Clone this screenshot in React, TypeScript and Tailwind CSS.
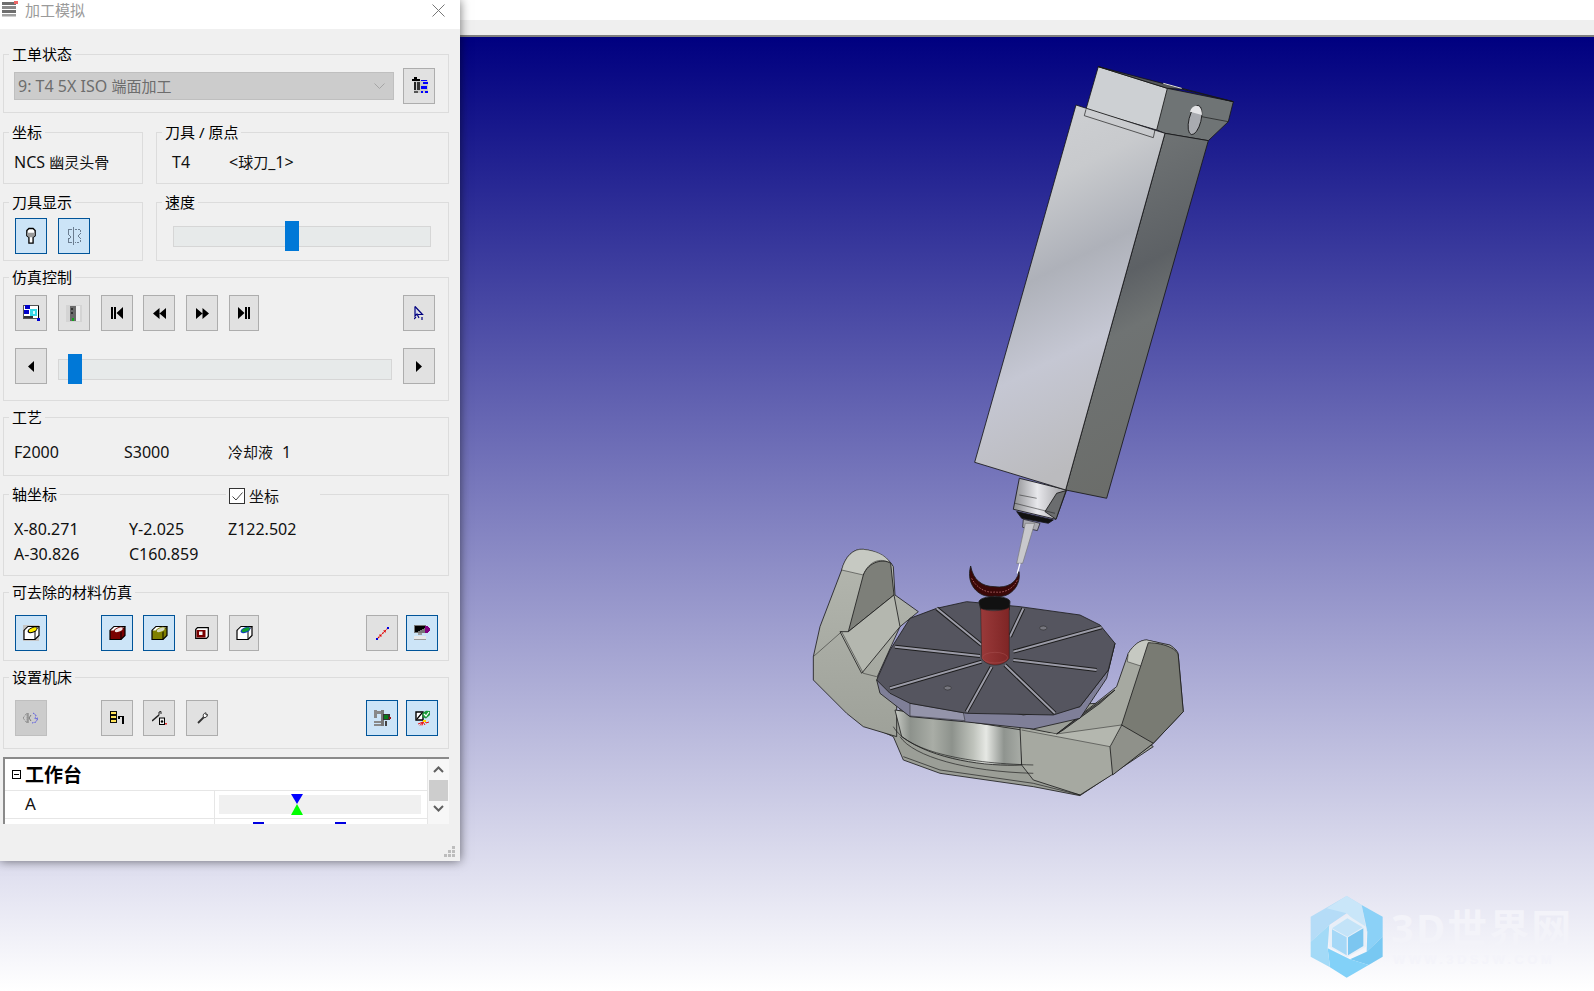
import React from "react";

const FONT = "font-['Noto_Sans','Noto_Sans_CJK_SC',sans-serif]";

type GroupProps = {
  title?: string;
  className?: string;
  children?: React.ReactNode;
  legend?: React.ReactNode;
};

// group box with the caption sitting on its top border
const Group = ({ title, className = "", children, legend }: GroupProps) => (
  <div className={`relative border border-[#dcdcdc] ${className}`}>
    {title && (
      <span className="absolute left-[5px] -top-[11px] bg-[#f0f0f0] px-[3px] text-[15px] leading-5 text-black whitespace-nowrap">
        {title}
      </span>
    )}
    {legend}
    {children}
  </div>
);

type BtnProps = {
  on?: boolean;
  disabled?: boolean;
  className?: string;
  children?: React.ReactNode;
};

const Btn = ({ on, disabled, className = "w-8", children }: BtnProps) => (
  <div
    className={`flex h-9 shrink-0 items-center justify-center border ${
      on
        ? "border-[#005499] bg-[#cce4f7]"
        : disabled
          ? "border-[#bfbfbf] bg-[#cccccc]"
          : "border-[#adadad] bg-[#e1e1e1]"
    } ${className}`}
  >
    {children}
  </div>
);

const Slider = ({ className, thumb }: { className: string; thumb: string }) => (
  <div className={`relative h-[21px] border border-[#d6d6d6] bg-[#e7eaea] ${className}`}>
    <div className={`absolute -top-[6px] h-[30px] w-[14px] bg-[#0078d7] ${thumb}`} />
  </div>
);

// latin runs read a little larger than the CJK ones in the original
const Num = ({ children, className = "" }: { children: React.ReactNode; className?: string }) => (
  <span className={`text-[16px] ${className}`}>{children}</span>
);

const Svg = ({ children, size = 16 }: { children: React.ReactNode; size?: number }) => (
  <svg width={size} height={size} viewBox="0 0 16 16" shapeRendering="crispEdges">
    {children}
  </svg>
);

const Cube = ({ fill, lens, rim, bg }: { fill: string; lens: string; rim?: string; bg?: string }) => (
  <svg width="17" height="16" viewBox="0 0 17 16">
    {bg && <rect x="0" y="0" width="16" height="16" fill={bg} />}
    <path d="M1 5.5 5 1.5H16V10.5L12 14.5H1Z" fill={fill} stroke="#000" strokeWidth="1.2" />
    <path d="M1.5 5.5 5.3 2H15.5L12 5.5Z" fill="#fff" />
    <path d="M12 14.5V5.5L16 1.5" fill="none" stroke="#000" strokeWidth="1" />
    <ellipse cx="9.5" cy="5" rx="5.2" ry="2.7" fill={rim ?? "#000"} transform="rotate(-22 9.5 5)" />
    <ellipse cx="9.7" cy="4.8" rx="4.2" ry="1.8" fill={lens} transform="rotate(-22 9.7 4.8)" />
  </svg>
);

const GridIcon = () => (
  <Svg size={17}>
    <rect x="3" y="3" width="13" height="12" fill="#c8c8c8" />
    <rect x="1" y="2" width="7" height="2" fill="#000" />
    <rect x="3" y="0" width="3" height="2" fill="#000" />
    <rect x="3" y="5" width="2" height="7" fill="#222" />
    <rect x="6" y="5" width="2" height="7" fill="#333" />
    <rect x="3" y="13" width="4" height="2" fill="#555" />
    <rect x="9" y="3" width="6" height="1" fill="#00f" />
    <rect x="11" y="5" width="5" height="2" fill="#00f" />
    <rect x="9" y="8" width="6" height="3" fill="#00f" />
    <rect x="9" y="13" width="2" height="2" fill="#00f" />
    <rect x="13" y="13" width="3" height="2" fill="#00f" />
  </Svg>
);

const ToolIcon = () => (
  <svg width="10" height="18" viewBox="0 0 12 20">
    <path d="M1 3.5 3.5 1H8.5L11 3.5V9.5L8.5 11.5V18.5H3.5V11.5L1 9.5Z" fill="#fff" stroke="#000" strokeWidth="1.6" />
    <path d="M1.5 6H10.5V9.5L8.5 11.5H3.5L1.5 9.5Z" fill="#9a9a9a" />
  </svg>
);

const ToolIconPale = () => (
  <svg width="14" height="18" viewBox="0 0 14 18" fill="none" stroke="#6b7d90" strokeWidth="1" shapeRendering="crispEdges">
    <path d="M6.5 0V18" />
    <path d="M5 2H1V7L3 9V11L1 12V15H5" />
    <path d="M8 2H13V7L11 8V10L13 11V15H8" strokeDasharray="2 1" />
  </svg>
);

const SimIcon = () => (
  <Svg size={17}>
    <rect x="0" y="0" width="15" height="13" fill="#555" />
    <rect x="1" y="1" width="13" height="11" fill="#fff" />
    <rect x="2" y="0" width="5" height="4" fill="#0000c8" />
    <rect x="1" y="5" width="5" height="3" fill="#0000c8" />
    <rect x="7" y="4" width="6" height="6" fill="#38d8e8" />
    <rect x="9" y="6" width="2" height="2" fill="#d8f8ff" />
    <rect x="1" y="10" width="8" height="2" fill="#333" />
    <rect x="14" y="1" width="1" height="11" fill="#000" />
    <rect x="13" y="12" width="3" height="3" fill="#0000d0" />
  </Svg>
);

const MachineIcon = () => (
  <svg width="16" height="17" viewBox="0 0 16 17" shapeRendering="crispEdges">
    <rect x="0" y="0" width="16" height="17" fill="#d4d4d4" />
    <rect x="4" y="1" width="6" height="15" fill="#6a6a6a" />
    <rect x="5" y="3" width="2" height="2" fill="#333" />
    <rect x="5" y="7" width="2" height="2" fill="#333" />
    <rect x="10" y="1" width="4" height="15" fill="#eeeeee" />
    <rect x="6" y="13" width="2" height="3" fill="#12a51a" />
  </svg>
);

// media buttons
const First = () => (
  <svg width="12" height="12" viewBox="0 0 12 12">
    <path d="M0 0H2V12H0ZM3 0H5V12H3ZM12 0V12L5.5 6Z" fill="#000" />
  </svg>
);
const Back = () => (
  <svg width="13" height="11" viewBox="0 0 13 11">
    <path d="M6.5 0V11L0 5.5ZM13 0V11L6.5 5.5Z" fill="#000" />
  </svg>
);
const Forward = () => (
  <svg width="13" height="11" viewBox="0 0 13 11">
    <path d="M0 0V11L6.5 5.5ZM6.5 0V11L13 5.5Z" fill="#000" />
  </svg>
);
const Last = () => (
  <svg width="12" height="12" viewBox="0 0 12 12">
    <path d="M0 0 6.5 6 0 12ZM7 0H9V12H7ZM10 0H12V12H10Z" fill="#000" />
  </svg>
);

const CursorIcon = () => (
  <svg width="10" height="15" viewBox="0 0 10 15">
    <path d="M1 0.5V10L3 8L5 12" fill="#c9d3f2" stroke="#00007f" strokeWidth="1.2" />
    <path d="M1 .5 8.5 8.5H4" fill="none" stroke="#00007f" strokeWidth="1.2" />
    <path d="M0 13 2 11M8 14V11" stroke="#00007f" strokeWidth="1.2" />
  </svg>
);

const MeasureIcon = () => (
  <svg width="13" height="13" viewBox="0 0 13 13">
    <path d="M2 11 11 2" stroke="#e00000" strokeWidth="1.2" strokeDasharray="2 1" />
    <path d="M7 3.5 9.5 3.5 9.5 6ZM3.5 7 3.5 9.5 6 9.5Z" fill="#e00000" />
    <rect x="0" y="11" width="2" height="2" fill="#0000e0" />
    <rect x="11" y="0" width="2" height="2" fill="#0000e0" />
  </svg>
);

const MonitorIcon = () => (
  <svg width="16" height="16" viewBox="0 0 16 16" shapeRendering="crispEdges">
    <rect x="0" y="0" width="12" height="8" fill="#777" />
    <path d="M1 1H11V3L3 7H1Z" fill="#000" />
    <rect x="4" y="8" width="4" height="2" fill="#999" />
    <rect x="0" y="11" width="12" height="3" fill="#e8e8e8" />
    <rect x="0" y="14" width="12" height="1" fill="#999" />
    <path d="M11 1H13L16 4V5L13 8H11Z" fill="#800080" />
  </svg>
);

const DimIcon = () => (
  <svg width="16" height="12" viewBox="0 0 16 12" fill="none" strokeWidth="1">
    <path d="M0 6 4 1V11Z" stroke="#777" strokeDasharray="1 1" />
    <path d="M5 1V11M8 3 6 6 8 9" stroke="#777" />
    <path d="M10 1 13 3 12 7 15 6 13 10 9 11" stroke="#5a5ae0" strokeDasharray="2 1" />
  </svg>
);

const TreeIcon = () => (
  <Svg size={15}>
    <rect x="0" y="0" width="1" height="12" fill="#000" />
    <rect x="1" y="1" width="6" height="3" fill="#ffe35a" stroke="#000" />
    <rect x="1" y="5" width="6" height="3" fill="#ffe35a" stroke="#000" />
    <rect x="1" y="9" width="6" height="3" fill="#ffe35a" stroke="#000" />
    <rect x="8" y="5" width="7" height="1" fill="#000" />
    <rect x="8" y="8" width="7" height="1" fill="#000" />
    <rect x="13" y="5" width="2" height="9" fill="#000" />
    <rect x="9" y="6" width="2" height="2" fill="#000" />
  </Svg>
);

const WrenchLockIcon = () => (
  <svg width="15" height="14" viewBox="0 0 15 14">
    <path d="M0 10 7 4" stroke="#222" strokeWidth="1.6" />
    <path d="M7 4V1L9 0.5V3" fill="none" stroke="#222" strokeWidth="1" />
    <rect x="7.5" y="7" width="5" height="6.5" fill="#eee" stroke="#000" />
    <circle cx="10" cy="10.5" r="1.2" fill="#000" />
    <rect x="13" y="12" width="2" height="1.5" fill="#e03030" />
  </svg>
);

const WrenchIcon = () => (
  <svg width="11" height="12" viewBox="0 0 11 12">
    <path d="M1 11 7 5" stroke="#333" strokeWidth="1.8" />
    <path d="M6.5 5.5C5.5 3 7 .8 9 .8V3L10.5 2.5C10.8 4.5 8.5 6.2 6.5 5.5Z" fill="#fff" stroke="#333" />
  </svg>
);

const RobotIcon = () => (
  <svg width="17" height="17" viewBox="0 0 17 17" shapeRendering="crispEdges">
    <rect x="0" y="0" width="3" height="8" fill="#888" />
    <rect x="0" y="1" width="10" height="3" fill="#888" />
    <rect x="7" y="0" width="3" height="16" fill="#777" />
    <rect x="9" y="4" width="7" height="6" fill="#333" />
    <rect x="10" y="5" width="4" height="4" fill="#0a7a1a" />
    <rect x="15" y="7" width="2" height="2" fill="#a01010" />
    <rect x="0" y="11" width="7" height="2" fill="#888" />
    <rect x="0" y="14" width="7" height="2" fill="#888" />
    <rect x="11" y="11" width="2" height="5" fill="#444" />
  </svg>
);

const CheckMachineIcon = () => (
  <svg width="15" height="16" viewBox="0 0 15 16">
    <path d="M1 2H8V10H1Z" fill="#fff" stroke="#000" strokeWidth="1.4" />
    <path d="M2 9 7 3" stroke="#000" strokeWidth="1.2" />
    <path d="M7.5 3 11 .8 15 1V5L11 8.5 7.5 7Z" fill="#1a9a3a" />
    <path d="M9 4 11 6 14 2" fill="none" stroke="#fff" strokeWidth="1.2" />
    <path d="M3 14 8 12 10 10 11 13 14 12M5 15.5 8 12 7 15.5M10 15 8 12" fill="none" stroke="#ee1111" strokeWidth="1" />
    <path d="M8 10H11V12H8Z" fill="#ffd800" />
  </svg>
);

const TitleIcon = () => (
  <svg className="mt-[1px]" width="18" height="16" viewBox="0 0 18 16">
    <rect x="1" y="1" width="14" height="3" fill="#6e6e6e" />
    <rect x="1" y="5" width="14" height="3" fill="#8a8a8a" />
    <rect x="1" y="9" width="14" height="3" fill="#6e6e6e" />
    <rect x="1" y="13" width="14" height="2.5" fill="#a0a0a0" />
    <rect x="13" y="0" width="4" height="3" fill="#e66" />
  </svg>
);

const SLOTS =
  "M410 235 545 345M670 235 630 320M905 292 640 365M890 420 640 390M765 550 615 405M500 545 575 410M270 475 545 395M285 350 540 378";

const Model = () => (
  <svg className="absolute inset-0" width="1594" height="954" viewBox="0 37 1594 954">
    <defs>
      <linearGradient id="front" x1="0" y1="0" x2="0.25" y2="1">
        <stop offset="0" stopColor="#d1d3d6" />
        <stop offset="0.28" stopColor="#c8cacd" />
        <stop offset="0.5" stopColor="#aeb1b9" />
        <stop offset="0.72" stopColor="#c5c7d3" />
        <stop offset="1" stopColor="#bbbbbe" />
      </linearGradient>
      <linearGradient id="side" x1="0" y1="0" x2="0.2" y2="1">
        <stop offset="0" stopColor="#767a7a" />
        <stop offset="0.45" stopColor="#5d6165" />
        <stop offset="0.6" stopColor="#6f7373" />
        <stop offset="1" stopColor="#6b6d6a" />
      </linearGradient>
      <linearGradient id="drum" x1="0" y1="0" x2="1" y2="0">
        <stop offset="0" stopColor="#c8cbc5" />
        <stop offset="0.12" stopColor="#8d928c" />
        <stop offset="0.3" stopColor="#a9ada6" />
        <stop offset="0.45" stopColor="#8d928c" />
        <stop offset="0.62" stopColor="#bfc3bc" />
        <stop offset="0.72" stopColor="#e6e8e4" />
        <stop offset="0.86" stopColor="#8f948f" />
        <stop offset="1" stopColor="#a9ada7" />
      </linearGradient>
      <linearGradient id="arm" x1="0" y1="0" x2="0" y2="1">
        <stop offset="0" stopColor="#b4b7af" />
        <stop offset="1" stopColor="#9ea199" />
      </linearGradient>
      <linearGradient id="nose" x1="0" y1="0" x2="1" y2="0">
        <stop offset="0" stopColor="#8c8d90" />
        <stop offset="0.45" stopColor="#e8e8ec" />
        <stop offset="1" stopColor="#9a9a9e" />
      </linearGradient>
      <linearGradient id="red" x1="0" y1="0" x2="1" y2="0">
        <stop offset="0" stopColor="#9a3a3a" />
        <stop offset="1" stopColor="#7e2525" />
      </linearGradient>
    </defs>

    {/* spindle head, drawn in 3x crop coordinates */}
    <g transform="translate(960 50) scale(0.3333)" stroke="#161616" strokeWidth="2.5" strokeLinejoin="round">
      <path d="M190 1408 240 1420 232 1442 188 1432Z" fill="#a9a9b0" strokeWidth="2" />
      <path d="M170 1385 280 1410 265 1420 185 1405Z" fill="#111" />
      <path d="M178 1285 320 1320 288 1408 160 1378Z" fill="url(#nose)" />
      <path d="M290 1330 318 1322 288 1408 255 1385Z" fill="#6b6d6f" />
      <path d="M178 1335 230 1345M165 1360 285 1390" fill="none" strokeWidth="1.5" />
      <path d="M415 50 622 115 820 155 805 215 745 272 615 250 590 240Z" fill="#6f7475" />
      <path d="M415 50 622 115 590 240 378 178Z" fill="#cdd0d3" />
      <path d="M415 50 820 155 668 118 622 115Z" fill="#55585a" />
      <path d="M610 100 665 115" stroke="#e6e6e6" strokeWidth="3" />
      <path d="M725 200 805 215" fill="none" strokeWidth="2" />
      <ellipse cx="705" cy="210" rx="18" ry="45" fill="#a9abb0" transform="rotate(14 705 210)" />
      <path d="M690 185C698 160 725 160 726 195Z" fill="#e4e4e6" stroke="none" />
      <path d="M615 250 745 272 440 1345 317 1320Z" fill="url(#side)" />
      <path d="M348 165 615 250 317 1320 44 1237Z" fill="url(#front)" />
      <path d="M378 178 373 197 580 263 585 240" fill="none" strokeWidth="2" />
    </g>

    {/* rotary table, same scale */}
    <g transform="translate(800 530) scale(0.3333)" stroke="#1d1d1d" strokeWidth="2.5" strokeLinejoin="round">
      <path d="M676 -20 704 -20 668 100 650 100Z" fill="#c8c8cc" stroke="#777" strokeWidth="2" />
      <path d="M652 130 660 100" stroke="#fff" strokeWidth="4" />
      <path d="M190 580 280 620 310 690 420 730 700 770 840 797 1060 650 900 520 300 540Z" fill="#9b9e97" />
      <path d="M40 380 60 290 125 120C135 80 160 55 190 58 225 62 265 80 280 110L285 195 355 245 300 290 232 440 290 530 290 620 190 590 140 550 40 450Z" fill="url(#arm)" />
      <path d="M125 120C135 80 160 55 190 58 225 62 255 72 272 100 240 80 205 95 190 135Z" fill="#c6c9c2" strokeWidth="1.5" />
      <path d="M190 135C205 95 250 85 272 100L282 195 145 305Z" fill="#7d7f79" />
      <path d="M120 305 185 430 300 290 282 195 145 305Z" fill="#b4b7af" />
      <path d="M40 380 125 305 190 430 230 440" fill="none" strokeWidth="1.5" />
      <path d="M285 540 665 600 665 705C560 710 400 690 305 620Z" fill="url(#drum)" />
      <path d="M660 590 770 612 950 470 985 370C1000 345 1020 330 1040 330L1110 345C1125 355 1135 365 1135 375L1150 545 1060 640 935 735 840 795 700 750 665 705Z" fill="#a6a9a1" />
      <path d="M985 370C1000 345 1020 330 1040 330L1075 338 1035 412 982 395Z" fill="#c6c9c2" strokeWidth="1.5" />
      <path d="M1045 338C1100 340 1135 360 1135 378L1150 545 1060 640C1000 640 975 610 965 585Z" fill="#797b73" />
      <path d="M930 650 938 735 1060 640 965 585Z" fill="#8f918a" />
      <path d="M665 600 930 650 965 585 770 612" fill="#b4b7af" strokeWidth="1.5" />
      <path d="M770 612 945 480 900 520 790 600Z" fill="#5c5c5c" />
      <path d="M280 590C320 660 480 700 700 705M300 620C340 680 500 725 700 730M310 680 420 720 700 760 840 795" fill="none" strokeWidth="2" />
      <path d="M230 450 240 490 330 560 490 575 700 597 840 565 920 445 945 340 925 420 840 530 670 555Z" fill="#7f7f98" />
      <path d="M330 520 490 548 495 572 330 558Z" fill="#9494aa" strokeWidth="1.5" />
      <path d="M230 450 270 360 330 265 410 235 500 215 660 230 840 255 900 285 945 340 925 420 840 530 760 555 500 550 330 520 270 490Z" fill="#55555f" />
      <path d={SLOTS} fill="none" stroke="#1d1d1d" strokeWidth="12" />
      <path d={SLOTS} fill="none" stroke="#9c9ca8" strokeWidth="6" />
      <ellipse cx="730" cy="294" rx="11" ry="6" fill="#77777f" strokeWidth="1.5" />
      <ellipse cx="443" cy="474" rx="11" ry="6" fill="#77777f" strokeWidth="1.5" />
      <path d="M537 215C540 195 628 195 630 215L628 240 542 238Z" fill="#111" />
      <path d="M542 235C560 245 610 245 628 232V385C610 412 560 412 545 385Z" fill="url(#red)" strokeWidth="1.5" />
      <ellipse cx="585" cy="383" rx="38" ry="16" fill="none" stroke="#a85050" strokeWidth="1.5" />
      <path d="M512 108C495 170 545 208 585 198 625 208 665 170 657 125 650 160 620 175 585 170 545 170 520 150 512 108Z" fill="#3a0808" />
      <path d="M515 145C530 175 560 190 585 186 610 190 640 178 652 150" fill="none" stroke="#a05858" strokeWidth="3" strokeDasharray="5 4" />
    </g>

    {/* watermark logo */}
    <g transform="translate(1290 880) scale(0.3333)">
      <path d="M62 110 170 48 215 75 170 100 118 135 62 185Z" fill="#b5dcf7" />
      <path d="M110 85 170 48 215 75 230 155 170 100Z" fill="#c9e6f9" />
      <path d="M215 75 278 110V170L230 215 232 155Z" fill="#8bd1f7" />
      <path d="M278 170V230L236 255 180 238 230 215Z" fill="#78c8f2" />
      <path d="M236 255 170 293 120 262 113 205 180 238Z" fill="#82d1f8" />
      <path d="M120 262 62 230V185L118 135 113 205Z" fill="#a3daf7" />
      <path d="M172 105 228 140V200L172 232 118 200V140Z" fill="#e7eff8" />
      <path d="M172 115 218 142 172 170 126 145Z" fill="#c3e3f8" />
      <path d="M126 148 170 172V226L126 200Z" fill="#a5d8f7" />
      <path d="M174 172 220 145V198L174 226Z" fill="#7cc6f0" />
    </g>
  </svg>
);

export default function App() {
  return (
    <div className={`relative flex h-[991px] w-full flex-col overflow-hidden ${FONT}`}>
      <div className="h-5 shrink-0 bg-white" />
      <div className="h-[15px] shrink-0 bg-[#efefef]" />
      <div className="h-[2px] shrink-0 bg-[#7f7f7f]" />

      <div className="relative flex-1 bg-[linear-gradient(180deg,#000080,#ffffff)]">
        <Model />
        <span className="absolute left-[1391px] top-[869px] text-[40px] font-bold leading-[44px] tracking-[2px] text-[#f3f3f9] whitespace-nowrap">
          3D世界网
        </span>
        <span className="absolute left-[1393px] top-[915px] font-['Liberation_Sans'] text-[13px] font-bold leading-4 tracking-[3.4px] text-[#f4f4fa] whitespace-nowrap">
          WWW.3DSJW.COM
        </span>
      </div>

      {/* floating dialog */}
      <div className="absolute left-0 top-0 h-[861px] w-[460px] bg-[#f0f0f0] text-[15px] leading-5 text-[#111] shadow-[0_0_10px_rgba(0,0,0,0.55)]">
        <div className="flex h-[29px] items-start bg-white pl-[1px] pr-[15px]">
          <TitleIcon />
          <span className="ml-[6px] text-[15px] text-[#9a9a9a]">加工模拟</span>
          <svg className="ml-auto mt-[4px]" width="13" height="13" viewBox="0 0 13 13" stroke="#777" strokeWidth="1">
            <path d="M.5.5 12.5 12.5M12.5.5 .5 12.5" />
          </svg>
        </div>

        <div className="flex flex-col pl-[3px] pr-[11px]">
          <Group title="工单状态" className="mt-[25px] flex h-[59px] items-center pl-[10px] pt-[4px]">
            <div className="flex h-7 w-[380px] items-center justify-between border border-[#bfbfbf] bg-[#cccccc] pl-[3px] pr-[8px] text-[#6d6d6d]">
              <span>
                <Num>9: T4 5X ISO </Num>端面加工
              </span>
              <svg width="11" height="6" viewBox="0 0 11 6" fill="none" stroke="#a5a5a5">
                <path d="M.5.5 5.5 5.5 10.5.5" />
              </svg>
            </div>
            <Btn className="ml-[9px] w-8">
              <GridIcon />
            </Btn>
          </Group>

          <div className="mt-[19px] flex gap-[13px]">
            <Group title="坐标" className="flex h-[52px] w-[140px] items-center pl-[10px] pt-[8px]">
              <span className="whitespace-nowrap">
                <Num>NCS </Num>幽灵头骨
              </span>
            </Group>
            <Group title="刀具 / 原点" className="flex h-[52px] flex-1 items-center pl-[15px] pt-[8px]">
              <Num className="w-[57px]">T4</Num>
              <span>
                <Num>&lt;</Num>球刀<Num>_1&gt;</Num>
              </span>
            </Group>
          </div>

          <div className="mt-[18px] flex gap-[13px]">
            <Group title="刀具显示" className="flex h-[59px] w-[140px] items-center gap-[11px] pl-[11px] pt-[9px]">
              <Btn on>
                <ToolIcon />
              </Btn>
              <Btn on>
                <ToolIconPale />
              </Btn>
            </Group>
            <Group title="速度" className="flex h-[59px] flex-1 items-center pl-[16px] pt-[9px]">
              <Slider className="w-[258px]" thumb="left-[111px]" />
            </Group>
          </div>

          <Group title="仿真控制" className="mt-[16px] h-[124px] pl-[11px] pr-[13px] pt-[17px]">
            <div className="flex">
              <Btn>
                <SimIcon />
              </Btn>
              <Btn className="ml-[11px] w-8">
                <MachineIcon />
              </Btn>
              <Btn className="ml-[11px] w-8">
                <First />
              </Btn>
              <Btn className="ml-[10px] w-8">
                <Back />
              </Btn>
              <Btn className="ml-[11px] w-8">
                <Forward />
              </Btn>
              <Btn className="ml-[11px] w-[30px]">
                <Last />
              </Btn>
              <Btn className="ml-auto w-8">
                <CursorIcon />
              </Btn>
            </div>
            <div className="mt-[17px] flex items-start">
              <Btn>
                <svg width="6" height="11" viewBox="0 0 6 11">
                  <path d="M6 0V11L0 5.5Z" fill="#000" />
                </svg>
              </Btn>
              <Slider className="ml-[11px] mt-[11px] w-[334px]" thumb="left-[9px]" />
              <Btn className="ml-[11px] w-8">
                <svg width="6" height="11" viewBox="0 0 6 11">
                  <path d="M0 0V11L6 5.5Z" fill="#000" />
                </svg>
              </Btn>
            </div>
          </Group>

          <Group title="工艺" className="mt-[16px] flex h-[59px] items-center pl-[10px] pt-[11px]">
            <Num className="w-[110px]">F2000</Num>
            <Num className="w-[104px]">S3000</Num>
            <span>冷却液</span>
            <Num className="ml-[9px]">1</Num>
          </Group>

          <Group
            title="轴坐标"
            className="mt-[18px] h-[82px] pl-[10px] pt-[21px]"
            legend={
              <div className="absolute left-[222px] -top-[9px] flex w-[94px] items-center gap-1 bg-[#f0f0f0] pl-[3px]">
                <div className="flex h-4 w-4 items-center justify-center border border-[#333] bg-white">
                  <svg width="11" height="9" viewBox="0 0 11 9" fill="none" stroke="#444" strokeWidth="1">
                    <path d="M.5 4.5 4 8 10.5.5" />
                  </svg>
                </div>
                <span>坐标</span>
              </div>
            }
          >
            <div className="flex h-[25px] items-center">
              <Num className="w-[115px]">X-80.271</Num>
              <Num className="w-[99px]">Y-2.025</Num>
              <Num>Z122.502</Num>
            </div>
            <div className="flex h-[25px] items-center">
              <Num className="w-[115px]">A-30.826</Num>
              <Num>C160.859</Num>
            </div>
          </Group>

          <Group title="可去除的材料仿真" className="mt-[16px] flex h-[69px] items-start pl-[11px] pr-[10px] pt-[22px]">
            <Btn on>
              <Cube fill="#fff" lens="#ffee00" bg="#c4c4c4" />
            </Btn>
            <Btn on className="ml-[54px] w-8">
              <Cube fill="#7a0000" lens="#f2e6e6" rim="#7a0000" />
            </Btn>
            <Btn on className="ml-[10px] w-8">
              <Cube fill="#808000" lens="#d6dcc0" rim="#808000" />
            </Btn>
            <Btn className="ml-[11px] w-8">
              <svg width="14" height="12" viewBox="0 0 14 12">
                <path d="M.7 2.5 2.5.7H13.3V9.5L11.5 11.3H.7Z" fill="#fff" stroke="#000" strokeWidth="1.2" />
                <rect x="1.5" y="3" width="9" height="7.5" fill="#7a0000" />
                <rect x="4" y="4.5" width="3.5" height="3.5" fill="#f4f4f4" />
              </svg>
            </Btn>
            <Btn className="ml-[11px] w-[30px]">
              <Cube fill="#fff" lens="#12a030" rim="#1040c0" />
            </Btn>
            <Btn className="ml-auto w-8">
              <MeasureIcon />
            </Btn>
            <Btn on className="ml-2 w-8">
              <MonitorIcon />
            </Btn>
          </Group>

          <Group title="设置机床" className="mt-[16px] flex h-[72px] items-start pl-[11px] pr-[10px] pt-[22px]">
            <Btn disabled>
              <DimIcon />
            </Btn>
            <Btn className="ml-[54px] w-8">
              <TreeIcon />
            </Btn>
            <Btn className="ml-[10px] w-8">
              <WrenchLockIcon />
            </Btn>
            <Btn className="ml-[11px] w-8">
              <WrenchIcon />
            </Btn>
            <Btn on className="ml-auto w-8">
              <RobotIcon />
            </Btn>
            <Btn on className="ml-2 w-8">
              <CheckMachineIcon />
            </Btn>
          </Group>

          {/* machine axes list */}
          <div className="mt-2 flex h-[67px] overflow-hidden border-l-2 border-t-2 border-[#8a8a8a] bg-white">
            <div className="flex-1 overflow-hidden">
              <div className="flex h-[32px] items-center border-b border-[#e6e6e6] pl-[7px]">
                <div className="flex h-[9px] w-[9px] items-center justify-center border border-black">
                  <div className="h-[1px] w-[5px] bg-black" />
                </div>
                <span className="ml-[4px] text-[19px] font-bold text-black">工作台</span>
              </div>
              <div className="flex h-[28px] border-b border-[#e6e6e6]">
                <div className="flex w-[210px] items-center border-r border-[#e6e6e6] pb-[2px] pl-[20px] text-[17px]">A</div>
                <div className="relative ml-1 mt-1 h-[19px] w-[202px] bg-[#f0f0f0]">
                  <div className="absolute -top-[1px] left-[72px] flex flex-col">
                    <svg width="13" height="21" viewBox="0 0 13 21">
                      <path d="M0 0H12L6 10Z" fill="#0000ff" />
                      <path d="M6 10 12 21H0Z" fill="#00ff00" />
                    </svg>
                  </div>
                </div>
              </div>
              <div className="relative flex h-2">
                <div className="w-[210px] border-r border-[#e6e6e6]" />
                <div className="absolute left-[248px] top-[3px] h-[2px] w-[11px] bg-[#0000e0]" />
                <div className="absolute left-[330px] top-[3px] h-[2px] w-[11px] bg-[#0000e0]" />
              </div>
            </div>
            <div className="flex w-[22px] flex-col items-center border-l border-[#e6e6e6] bg-[#f7f7f7]">
              <svg className="mt-[7px]" width="11" height="7" viewBox="0 0 11 7" fill="none" stroke="#606060" strokeWidth="2">
                <path d="M1 6 5.5 1.5 10 6" />
              </svg>
              <div className="mt-[7px] h-[21px] w-[19px] bg-[#cdcdcd]" />
              <svg className="mt-[4px]" width="11" height="7" viewBox="0 0 11 7" fill="none" stroke="#606060" strokeWidth="2">
                <path d="M1 1 5.5 5.5 10 1" />
              </svg>
            </div>
          </div>
        </div>

        {/* resize grip */}
        <svg className="absolute bottom-[3px] right-[4px]" width="12" height="12" viewBox="0 0 12 12" fill="#bdbdbd" shapeRendering="crispEdges">
          <rect x="8" y="0" width="3" height="3" />
          <rect x="4" y="4" width="3" height="3" />
          <rect x="8" y="4" width="3" height="3" />
          <rect x="0" y="8" width="3" height="3" />
          <rect x="4" y="8" width="3" height="3" />
          <rect x="8" y="8" width="3" height="3" />
        </svg>
      </div>
    </div>
  );
}
